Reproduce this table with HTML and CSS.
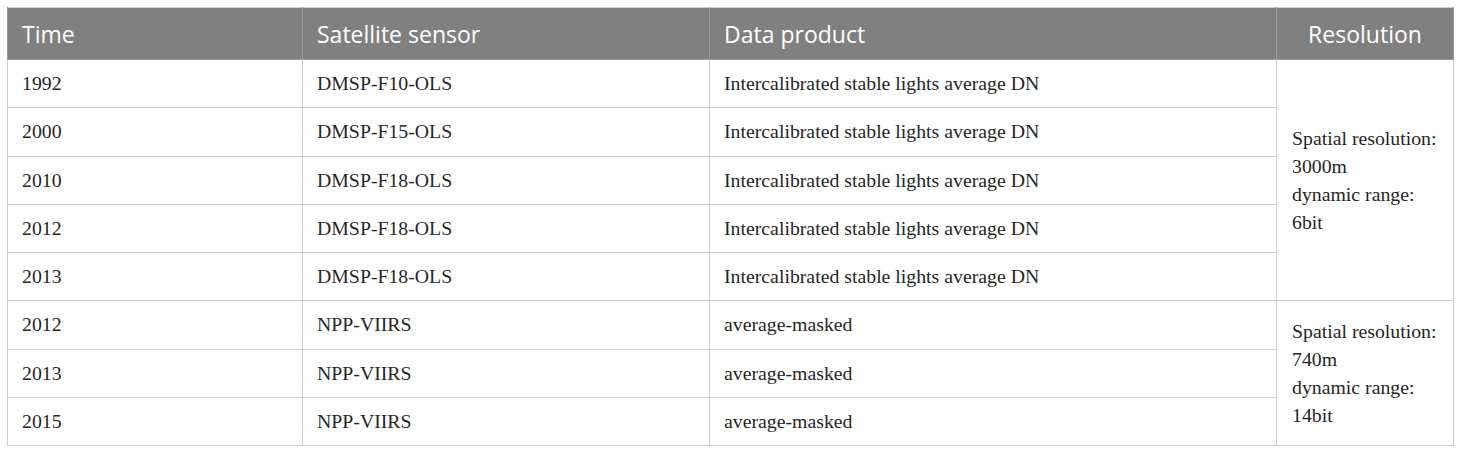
FILE: index.html
```html
<!DOCTYPE html>
<html>
<head>
<meta charset="utf-8">
<link rel="stylesheet" href="styles.css">
</head>
<body>
<table class="data">
  <colgroup>
    <col class="c-time">
    <col class="c-sensor">
    <col class="c-product">
    <col class="c-res">
  </colgroup>
  <thead>
    <tr>
      <th>Time</th>
      <th>Satellite sensor</th>
      <th>Data product</th>
      <th class="center">Resolution</th>
    </tr>
  </thead>
  <tbody>
    <tr><td>1992</td><td>DMSP-F10-OLS</td><td>Intercalibrated stable lights average DN</td><td rowspan="5" class="res">Spatial resolution:<br>3000m<br>dynamic range:<br>6bit</td></tr>
    <tr><td>2000</td><td>DMSP-F15-OLS</td><td>Intercalibrated stable lights average DN</td></tr>
    <tr><td>2010</td><td>DMSP-F18-OLS</td><td>Intercalibrated stable lights average DN</td></tr>
    <tr><td>2012</td><td>DMSP-F18-OLS</td><td>Intercalibrated stable lights average DN</td></tr>
    <tr><td>2013</td><td>DMSP-F18-OLS</td><td>Intercalibrated stable lights average DN</td></tr>
    <tr><td>2012</td><td>NPP-VIIRS</td><td>average-masked</td><td rowspan="3" class="res">Spatial resolution:<br>740m<br>dynamic range:<br>14bit</td></tr>
    <tr><td>2013</td><td>NPP-VIIRS</td><td>average-masked</td></tr>
    <tr><td>2015</td><td>NPP-VIIRS</td><td>average-masked</td></tr>
  </tbody>
</table>
</body>
</html>
```

FILE: styles.css
```css
html, body {
  margin: 0;
  padding: 0;
  background: #ffffff;
}
body {
  padding: 7px 0 0 7px;
}
.data {
  border-collapse: collapse;
  table-layout: fixed;
  width: 1446px;
  border: 1px solid #cfcfcf;
}
.c-time { width: 295px; }
.c-sensor { width: 407px; }
.c-product { width: 567px; }
.c-res { width: 177px; }
.data th {
  background: #808080;
  color: #ffffff;
  font-family: "Open Sans", "Liberation Sans", sans-serif;
  font-weight: 400;
  font-size: 23px;
  text-align: left;
  height: 52px;
  box-sizing: border-box;
  padding: 0 14px;
  border: 1px solid #9a9a9a;
  border-top: none;
}
.data th.center { text-align: center; }
.data td {
  font-family: "Liberation Serif", serif;
  font-size: 19.8px;
  color: #262626;
  height: 48.25px;
  box-sizing: border-box;
  padding: 0 14px;
  border: 1px solid #cfcfcf;
  line-height: 27px;
  vertical-align: middle;
}
.data td.res {
  padding-left: 15px;
  padding-right: 10px;
  line-height: 28px;
}
```
